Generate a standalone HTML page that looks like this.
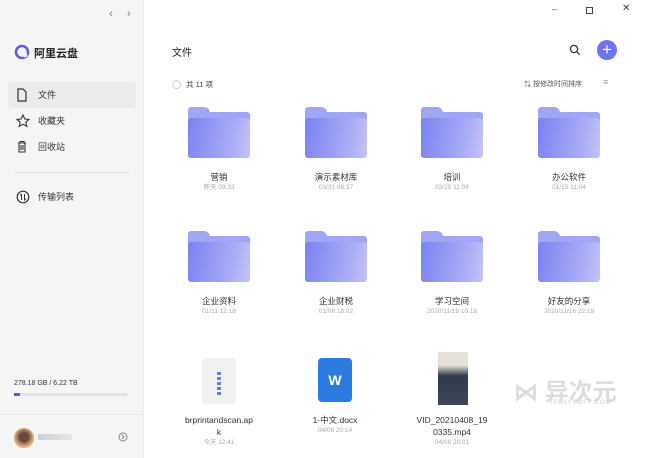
<!DOCTYPE html>
<html><head><meta charset="utf-8"><style>
*{margin:0;padding:0;box-sizing:border-box}
body{width:645px;height:458px;overflow:hidden;font-family:"Liberation Sans","Noto Sans CJK SC",sans-serif;background:#fff;position:relative;color:#333}
.sb{position:absolute;left:0;top:0;width:144px;height:458px;background:#f5f5f6;border-right:1px solid #ececec}
.a{position:absolute}
.nav{position:absolute;left:8px;width:128px;height:26px;font-size:9px;line-height:26px;padding-left:30px;color:#333}
.nav svg{position:absolute;left:8px;top:6px}
.f{position:absolute;width:116px;text-align:center}
.fold{position:relative;width:62px;height:51px;margin:0 auto}
.fold .back{position:absolute;left:0;top:5px;width:62px;height:40px;background:#9ea6f5;border-radius:3px}
.fold .tab{position:absolute;left:0;top:0;width:22px;height:8px;background:#9ea6f5;border-radius:3px 6px 0 0}
.fold .front{position:absolute;left:0;top:11px;width:62px;height:40px;border-radius:3px;background:linear-gradient(100deg,#7a82f0,#a9acf6 70%,#c6c3f6)}
.nm{font-size:8.5px;color:#333;margin-top:13px;line-height:12px}
.dt{font-size:6.5px;color:#aaa;line-height:10px}
</style></head><body>
<div class="sb">
 <div class="a" style="left:109px;top:8px;font-size:11px;color:#777">‹</div>
 <div class="a" style="left:127px;top:8px;font-size:11px;color:#777">›</div>
 <svg class="a" style="left:14px;top:44px" width="16" height="16"><circle cx="8" cy="8" r="6" fill="none" stroke="#5a5fd8" stroke-width="2.6"/><circle cx="11" cy="11" r="2.3" fill="#f5f5f6"/></svg>
 <div class="a" style="left:34px;top:45px;font-size:11px;font-weight:bold;color:#222">阿里云盘</div>
 <div class="nav" style="top:82px;background:#ebebed;border-radius:4px"><svg width="12" height="14"><path d="M2 1h5l3 3v9H2z" fill="none" stroke="#333" stroke-width="1.2"/></svg>文件</div>
 <div class="nav" style="top:108px"><svg width="14" height="14"><path d="M7 1l1.8 4 4.2.4-3.2 2.8 1 4.2L7 10.2 3.2 12.4l1-4.2L1 5.4l4.2-.4z" fill="none" stroke="#333" stroke-width="1.1"/></svg>收藏夹</div>
 <div class="nav" style="top:134px"><svg width="12" height="14"><path d="M2 3h8M4 3V1.5h4V3M3 3v9h6V3M5 5v5M7 5v5" fill="none" stroke="#333" stroke-width="1.1"/></svg>回收站</div>
 <div class="a" style="left:14px;top:172px;width:116px;height:1px;background:#e3e3e3"></div>
 <div class="nav" style="top:184px"><svg width="14" height="14"><circle cx="7" cy="7" r="5.8" fill="none" stroke="#333" stroke-width="1.2"/><path d="M5.5 4v6M5.5 4l-1.3 1.3M8.5 4v6l1.3-1.3" fill="none" stroke="#333" stroke-width="1"/></svg>传输列表</div>
 <div class="a" style="left:14px;top:380px;font-size:7px;color:#333">278.18 GB / 6.22 TB</div>
 <div class="a" style="left:14px;top:393px;width:114px;height:3px;background:#e2e2e4;border-radius:2px"><div style="width:6px;height:3px;background:#5a5fd8"></div></div>
 <div class="a" style="left:0;top:414px;width:144px;height:1px;background:#e8e8e8"></div>
 <div class="a" style="left:14px;top:428px;width:20px;height:20px;border-radius:50%;background:radial-gradient(circle at 50% 45%,#6b4a3a 30%,#d8a57a 60%,#eac9a6)"></div>
 <div class="a" style="left:38px;top:434px;width:34px;height:6px;background:linear-gradient(90deg,#cfcfcf,#e6e6e6)"></div>
 <svg class="a" style="left:118px;top:432px" width="10" height="10"><circle cx="5" cy="5" r="4" fill="none" stroke="#888"/><path d="M4 3l2 2-2 2" fill="none" stroke="#888"/></svg>
</div>
<div class="a" style="left:552px;top:4px;font-size:9px;color:#444">–</div>
<div class="a" style="left:586px;top:7px;width:7px;height:7px;border:1px solid #444"></div>
<div class="a" style="left:622px;top:3px;font-size:10px;color:#444">✕</div>
<div class="a" style="left:172px;top:44px;font-size:10px;color:#222">文件</div>
<svg class="a" style="left:569px;top:44px" width="12" height="12"><circle cx="5" cy="5" r="3.6" fill="none" stroke="#333" stroke-width="1.3"/><path d="M7.7 7.7l3 3" stroke="#333" stroke-width="1.3"/></svg>
<div class="a" style="left:597px;top:40px;width:20px;height:20px;border-radius:50%;background:#6b74ee"></div>
<div class="a" style="left:597px;top:40px;width:20px;height:20px;color:#fff;font-size:17px;line-height:19px;text-align:center;font-weight:300">+</div>
<div class="a" style="left:172px;top:80px;width:9px;height:9px;border:1px solid #ccc;border-radius:50%"></div>
<div class="a" style="left:186px;top:79px;font-size:7.5px;color:#333">共 11 项</div>
<div class="a" style="left:524px;top:79px;font-size:7px;color:#555">⇅ 按修改时间排序</div>
<div class="a" style="left:603px;top:77px;font-size:9px;color:#999">≡</div>

<div class="f" style="left:161px;top:107px"><div class="fold"><div class="back"></div><div class="tab"></div><div class="front"></div></div><div class="nm">营销</div><div class="dt">昨天 09:33</div></div>
<div class="f" style="left:278px;top:107px"><div class="fold"><div class="back"></div><div class="tab"></div><div class="front"></div></div><div class="nm">演示素材库</div><div class="dt">03/31 08:37</div></div>
<div class="f" style="left:394px;top:107px"><div class="fold"><div class="back"></div><div class="tab"></div><div class="front"></div></div><div class="nm">培训</div><div class="dt">03/25 11:04</div></div>
<div class="f" style="left:511px;top:107px"><div class="fold"><div class="back"></div><div class="tab"></div><div class="front"></div></div><div class="nm">办公软件</div><div class="dt">01/15 11:04</div></div>

<div class="f" style="left:161px;top:231px"><div class="fold"><div class="back"></div><div class="tab"></div><div class="front"></div></div><div class="nm">企业资料</div><div class="dt">01/11 12:18</div></div>
<div class="f" style="left:278px;top:231px"><div class="fold"><div class="back"></div><div class="tab"></div><div class="front"></div></div><div class="nm">企业财税</div><div class="dt">01/08 18:02</div></div>
<div class="f" style="left:394px;top:231px"><div class="fold"><div class="back"></div><div class="tab"></div><div class="front"></div></div><div class="nm">学习空间</div><div class="dt">2020/11/19 10:18</div></div>
<div class="f" style="left:511px;top:231px"><div class="fold"><div class="back"></div><div class="tab"></div><div class="front"></div></div><div class="nm">好友的分享</div><div class="dt">2020/11/16 22:19</div></div>

<div class="a" style="left:202px;top:358px;width:34px;height:46px;background:#f1f1f3;border-radius:4px"></div>
<div class="a" style="left:217px;top:372px;width:4px;height:24px;background:repeating-linear-gradient(#7077e0 0 3px,#f1f1f3 3px 5px)"></div>
<div class="a" style="left:318px;top:358px;width:34px;height:44px;background:#2b7be0;border-radius:4px;color:#fff;font-weight:bold;font-size:14px;text-align:center;line-height:44px">W</div>
<div class="a" style="left:438px;top:352px;width:30px;height:53px;background:linear-gradient(#e5e0d8 0 25%,#2f3a4a 45%,#3d4656)"></div>
<div class="f" style="left:161px;top:414px"><div style="font-size:8.5px;line-height:12px">brprintandscan.ap<br>k</div><div class="dt">今天 12:41</div></div>
<div class="f" style="left:277px;top:414px"><div style="font-size:8.5px;line-height:12px">1-中文.docx</div><div class="dt">04/08 20:14</div></div>
<div class="f" style="left:394px;top:414px"><div style="font-size:8.5px;line-height:12px">VID_20210408_19<br>0335.mp4</div><div class="dt">04/08 20:01</div></div>
<div class="a" style="left:514px;top:372px;font-size:24px;color:#ddd;font-weight:bold">⋈ 异次元</div>
<div class="a" style="left:551px;top:400px;font-size:6px;color:#ccc;letter-spacing:1px">IPLAYSOFT.COM</div>
</body></html>
